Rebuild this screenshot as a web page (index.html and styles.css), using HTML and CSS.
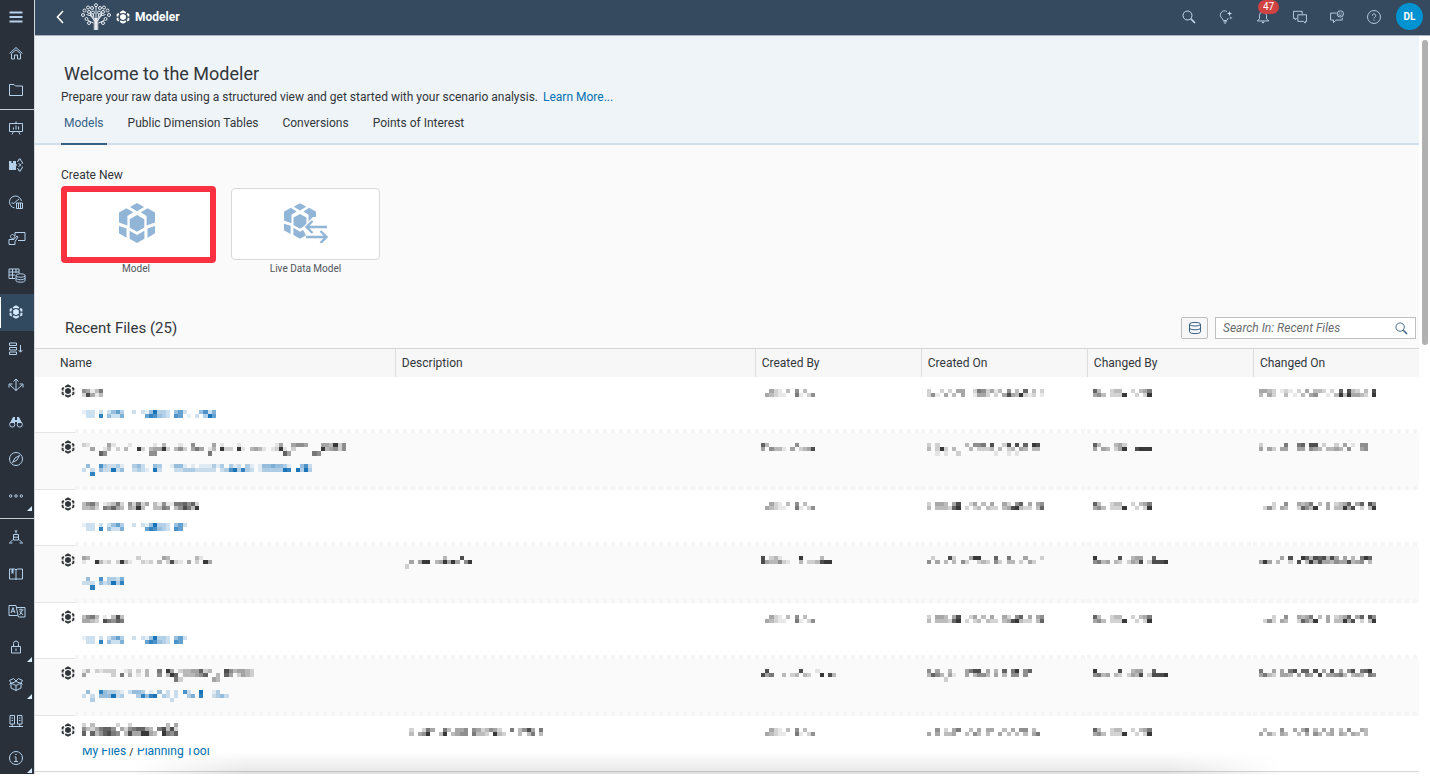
FILE: index.html
```html
<!DOCTYPE html>
<html lang="en">
<head>
    <meta charset="UTF-8">
    <meta name="viewport" content="width=device-width, initial-scale=1.0">
    <title>Modeler</title>
    <link rel="stylesheet" href="styles.css">
</head>
<body>

    <!-- Shared icons -->
    <svg class="symbols" aria-hidden="true">
        <symbol id="cube" viewBox="0 0 36 40">
            <path d="M18 0l7 4-7 4.200-7-4.200zM18 12l7.300 4.200v8.300L18 28.700l-7.300-4.200v-8.300zM0 9.500L7.500 5.200l6.700 4L8.400 13v9.500L0 19.500zM36 9.500l-7.500-4.300-6.700 4 5.800 3.800v9.500l8.400-3zM0 23l7.500 2.400v9.300L0 30.300zM36 23l-7.500 2.400v9.300l7.500-4.400zM10.600 27.700L18 32l7.400-4.300v8L18 40l-7.400-4.300z"/>
        </symbol>
        <symbol id="model" viewBox="0 0 14 14">
            <path d="M4.200 3L7 1.400 9.800 3M11 3.700l1.400.8v2M12.400 7.800v2L11 10.600M9.800 11.200L7 12.700l-2.800-1.500M3 10.600L1.600 9.800v-2M1.600 6.500v-2L3 3.700" fill="none" stroke="currentColor" stroke-width="1.900"/>
            <path d="M7 3.800l2.900 1.600v3.200L7 10.200 4.100 8.600V5.400z"/>
        </symbol>
        <symbol id="search" viewBox="0 0 14 14">
            <circle cx="5.500" cy="5.500" r="4.500" fill="none" stroke="currentColor"/>
            <path d="M8.900 8.900L13 13" stroke="currentColor" stroke-width="1.600"/>
        </symbol>
    </svg>

    <div class="app">
        <!-- Side Navigation -->
        <nav class="sidebar">
            <button class="nav-item menu" aria-label="Menu"><svg viewBox="0 0 16 16"><path d="M1.500 3.500h13M1.500 8h13M1.500 12.500h13" stroke-width="1.800"/></svg></button>
            <div class="nav-group">
                <button class="nav-item" aria-label="Home"><svg viewBox="0 0 16 16"><path d="M1.500 8.500L8 2.500l6.500 6M3.500 8.500v5.500h3v-4h3v4h3V8.500L8 4.800z"/></svg></button>
                <button class="nav-item" aria-label="Files"><svg viewBox="0 0 16 16"><path d="M1.500 13.500v-11h4.500l1.500 1.500h7v9.500z"/></svg></button>
            </div>
            <div class="nav-group">
                <button class="nav-item" aria-label="Stories"><svg viewBox="0 0 16 16"><path d="M1.500 3.500h13v8h-13zM8 1.500v2M5.500 11.500L4 14.500M10.500 11.500l1.500 3M5.500 9.500v-2M8 9.500v-4M10.500 9.500v-3"/></svg></button>
                <button class="nav-item" aria-label="Analytic Applications"><svg viewBox="0 0 16 16"><path class="solid" d="M1 4h2.500v2H5V4h3v3l1.500 1L8 9v4H1z"/><path d="M9 4.500l1.500-.5.5-2h1.500l.5 2 1.500 1-.5 2M14 9.500l.5 1.500-1.500 1-.5 2H11l-.5-2-1.500-.5M10.500 6.500l2.500 1.500-2.500 1.500"/></svg></button>
                <button class="nav-item" aria-label="Digital Boardroom"><svg viewBox="0 0 16 16"><path d="M6.500 13.900A6 6 0 1 1 13.400 7M5 10l6-5M3.500 9h1.500M8.500 9h6v5.500h-6zM10.500 9v5.500M12.500 9v5.500"/></svg></button>
                <button class="nav-item" aria-label="Presentations"><svg class="wide" viewBox="0 0 18 16"><path d="M7 6V2.500h10v8h-7M4.500 4.500a2 2 0 1 0 .1 0M1 14.500V9.500h5l3-3.500 1 1-3 4.500v3z"/></svg></button>
                <button class="nav-item" aria-label="Datasets"><svg class="wide" viewBox="0 0 18 16"><path d="M7 11.500H1V2h10v4M1 5h10M1 8h6M4.500 2v9.500M8 2v4"/><path d="M8 8.500c0-2.300 9-2.300 9 0s-9 2.300-9 0v5c0 2.300 9 2.300 9 0v-5M8 11c0 2.300 9 2.300 9 0"/></svg></button>
                <button class="nav-item selected" aria-label="Modeler"><svg viewBox="0 0 14 14"><use href="#model"/></svg></button>
                <button class="nav-item" aria-label="Data Actions"><svg viewBox="0 0 16 16"><path d="M1.500 2h7v2.500h-7zM1.500 6.500h7V9h-7zM1.500 11h7v2.500h-7zM12.500 4v7M10.500 9l2 2.200 2-2.200"/></svg></button>
                <button class="nav-item" aria-label="Allocations"><svg viewBox="0 0 16 16"><path d="M8 2v12M5.500 4.500L8 2l2.500 2.500M8 13.500L2 8M8 13.500L14 8M1 10.500V7h3.500M15 10.500V7h-3.500"/></svg></button>
                <button class="nav-item" aria-label="Data Analyzer"><svg viewBox="0 0 16 16"><path class="solid" d="M5 3h2v3h2V3h2l3 6H9V8H7v1H2z"/><circle cx="4.200" cy="10.500" r="2.600"/><circle cx="11.800" cy="10.500" r="2.600"/></svg></button>
                <button class="nav-item" aria-label="Explorer"><svg viewBox="0 0 16 16"><circle cx="8" cy="8" r="6.500"/><path d="M11.500 4.500L9 9l-4.500 2.500L7 7z"/></svg></button>
                <button class="nav-item more" aria-label="More"><svg viewBox="0 0 16 16"><circle cx="2.700" cy="8" r="1.200"/><circle cx="8" cy="8" r="1.200"/><circle cx="13.300" cy="8" r="1.200"/></svg></button>
            </div>
            <div class="nav-group">
                <button class="nav-item" aria-label="Connections"><svg viewBox="0 0 16 16"><path d="M8 1.500v3M5.500 5.500h5v5.500h-5zM5.500 8.200h5M5 10.500l-3 3M11 10.500l3 3M1 14h3.500M11.500 14H15M6.800 2h2.400"/></svg></button>
                <button class="nav-item" aria-label="Catalog"><svg viewBox="0 0 16 16"><path d="M8 3.500v10.500M1.500 3h5.500l1 1 1-1h5.500v10H1.500z"/><path class="solid" d="M3.500 3h2v5l-1-1-1 1z"/></svg></button>
                <button class="nav-item" aria-label="Translation"><svg class="wide" viewBox="0 0 18 16"><path d="M9 12.500H1v-10h7l2 10M8.500 4.500H17v9.500h-6.500l-1-2M3 10l2-5.500L7 10M4 8.200h2M11 6.800h4.500M13 5.500v1.300M11.500 12l3-5M11.500 8l3.500 4"/></svg></button>
                <button class="nav-item more" aria-label="Security"><svg viewBox="0 0 16 16"><path d="M3.500 7.500h9V14h-9zM5.500 7.500V4.500a2.500 2.500 0 0 1 5 0v3M8 9.500v2.500"/></svg></button>
                <button class="nav-item more" aria-label="Deployment"><svg viewBox="0 0 16 16"><path d="M8 5.500L3 7.500V12l5 2.500 5-2.500V7.500zM1.500 8.500L3 7l5 2.500L13 7l1.500 1.500M8 9.500v5M3 7L1.500 4.500 5.500 2.500 8 5l2.500-2.500 4 2L13 7"/></svg></button>
                <button class="nav-item" aria-label="System"><svg viewBox="0 0 16 16"><path d="M2 2.500h4.500V11H2zM9.500 2.500H14V11H9.500zM4.200 11v2.500M11.700 11v2.500M1 13.500h14M3.500 5h1.500M11 5h1.500M3.500 7.500h1.500M11 7.500h1.500"/></svg></button>
                <button class="nav-item more" aria-label="About"><svg viewBox="0 0 16 16"><circle cx="8" cy="8" r="6.500"/><path d="M6.500 7H8v4.500M6 11.500h4M7.300 4.500h1.400"/></svg></button>
            </div>
        </nav>

        <div class="main">
            <!-- Shell Bar -->
            <header class="shellbar">
                <button class="back" aria-label="Back"><svg viewBox="0 0 8 14"><path d="M7 1L1.500 7 7 13" fill="none" stroke="currentColor" stroke-width="1.600"/></svg></button>
                <svg class="logo" viewBox="0 0 30 28">
                    <defs>
                        <linearGradient id="trunk"><stop offset="0" stop-color="#8f9aa5"/><stop offset=".5" stop-color="#fff"/><stop offset="1" stop-color="#8f9aa5"/></linearGradient>
                    </defs>
                    <path d="M12.500 27V15h5v12z" fill="url(#trunk)"/>
                    <path d="M15 17V3M13.500 18L10 13l-4.500-1.500M10 13L8 7M12 15L9.500 10M12.500 20L7 17.500M13 16l-1-7M16.500 18l3.500-5 4.500-1.500M20 13l2-6M18 15l2.500-5M17.500 20l5.500-2.500M17 16l1-7" fill="none" stroke="#e8eef4"/>
                    <g fill="#354a5f" stroke="#e8eef4">
                        <circle cx="15" cy="2.200" r="1.500"/><circle cx="11" cy="5" r="1.500"/><circle cx="19" cy="5" r="1.500"/>
                        <circle cx="7" cy="4.500" r="1.500"/><circle cx="23" cy="4.500" r="1.500"/><circle cx="3.500" cy="7.500" r="1.500"/><circle cx="26.500" cy="7.500" r="1.500"/>
                        <circle cx="2" cy="12" r="1.500"/><circle cx="28" cy="12" r="1.500"/><circle cx="8" cy="9" r="1.500"/><circle cx="22" cy="9" r="1.500"/>
                        <circle cx="12" cy="9.500" r="1.500"/><circle cx="18" cy="9.500" r="1.500"/><circle cx="5.500" cy="16" r="1.500"/><circle cx="24.500" cy="16" r="1.500"/>
                        <circle cx="8" cy="20" r="1.500"/><circle cx="22" cy="20" r="1.500"/>
                    </g>
                </svg>
                <svg class="app-icon" viewBox="0 0 14 14"><use href="#model"/></svg>
                <span class="app-name">Modeler</span>
                <div class="shell-actions">
                    <button aria-label="Search"><svg viewBox="0 0 14 14"><use href="#search"/></svg></button>
                    <button aria-label="Insights"><svg viewBox="0 0 16 16"><path d="M9 1.800a4.700 4.700 0 0 0-5.500 7.700L5 12h4l1.500-2.800M5 13.500h4M6 15h2"/><path class="solid" d="M12 1l.8 2.200 2.200.8-2.200.8-.8 2.200-.8-2.200L9 4l2.200-.8zM13.500 7l.5 1.500 1.500.5-1.500.5-.5 1.500-.5-1.500-1.500-.5 1.500-.5z"/></svg></button>
                    <button aria-label="Notifications"><svg viewBox="0 0 16 16"><path d="M1.500 12.500L4 10V6a4 4 0 0 1 8 0v4l2.500 2.500z"/><path class="solid" d="M6 13.500h4l-2 2z"/></svg><span class="badge">47</span></button>
                    <button aria-label="Comments"><svg viewBox="0 0 16 16"><path d="M4.500 9.500L2.500 11V9.500h-2v-8h10V5M5.500 5.500h10v7.500h-1.500v2l-2-2H5.500z"/></svg></button>
                    <button aria-label="Feedback"><svg viewBox="0 0 16 16"><path d="M7.500 3.500H.7v8H4v3l3-3h7V9"/><circle cx="11.800" cy="4.500" r="3.600"/><path d="M9.800 5c1 1.700 3 1.700 4 0M10.300 3.500h1M12.300 3.500h1"/></svg></button>
                    <button aria-label="Help"><svg viewBox="0 0 16 16"><circle cx="8" cy="8" r="7.400"/><path d="M6 6.500c0-3 4-2.500 4 0C10 8 8 8 8 9.800M8 11v1.300"/></svg></button>
                    <button class="avatar">DL</button>
                </div>
            </header>

            <div class="content-wrap">
                <main class="content">
                    <section class="page-header">
                        <h1>Welcome to the Modeler</h1>
                        <p>Prepare your raw data using a structured view and get started with your scenario analysis. <a href="#">Learn More...</a></p>
                        <div class="tabs" role="tablist">
                            <button class="tab active" role="tab" aria-selected="true">Models</button>
                            <button class="tab" role="tab">Public Dimension Tables</button>
                            <button class="tab" role="tab">Conversions</button>
                            <button class="tab" role="tab">Points of Interest</button>
                        </div>
                    </section>

                    <!-- Create New -->
                    <section class="create">
                        <h2>Create New</h2>
                        <div class="tiles">
                            <div class="tile highlighted">
                                <button aria-labelledby="tileModel"><svg class="cube" viewBox="0 0 36 40"><use href="#cube"/></svg></button>
                                <span id="tileModel">Model</span>
                            </div>
                            <div class="tile">
                                <button aria-labelledby="tileLive">
                                    <svg class="live-cube" viewBox="0 0 44 40">
                                        <use href="#cube" width="32" height="36"/>
                                        <path d="M29 14L18 25l8 15h18V21L34 14z" fill="#fff"/>
                                        <path d="M43 24H23M28.500 18L22.500 24l6 6M22 34h20M36.500 28l6 6-6 6" fill="none" stroke="currentColor" stroke-width="2.400"/>
                                    </svg>
                                </button>
                                <span id="tileLive">Live Data Model</span>
                            </div>
                        </div>
                    </section>

                    <!-- Recent Files -->
                    <section class="recent">
                        <div class="toolbar">
                            <h2>Recent Files (25)</h2>
                            <button class="db-button" aria-label="Data sources"><svg viewBox="0 0 14 14"><path d="M1.500 3.200c0-2.400 11-2.400 11 0s-11 2.400-11 0v7.600c0 2.400 11 2.400 11 0V3.200M1.500 7c0 2.400 11 2.400 11 0" fill="none" stroke="currentColor"/></svg></button>
                            <div class="search-box">
                                <input type="text" aria-label="Search files" placeholder="Search In: Recent Files">
                                <svg viewBox="0 0 14 14"><use href="#search"/></svg>
                            </div>
                        </div>

                        <table class="files">
                            <colgroup>
                                <col class="col-icon"><col><col class="col-desc"><col class="col-meta"><col class="col-meta"><col class="col-meta"><col class="col-meta">
                            </colgroup>
                            <thead>
                                <tr>
                                    <th colspan="2">Name</th>
                                    <th>Description</th>
                                    <th>Created By</th>
                                    <th>Created On</th>
                                    <th>Changed By</th>
                                    <th>Changed On</th>
                                </tr>
                            </thead>
                            <tbody id="fileRows"></tbody>
                        </table>
                    </section>
                    <div class="bottom-shade"></div>
                </main>
                <div class="scrollbar"><div class="thumb"></div></div>
            </div>
        </div>
    </div>

    <script src="files.js"></script>
</body>
</html>
```
FILE: styles.css
```css
/* General Reset */
* {
    margin: 0;
    padding: 0;
    box-sizing: border-box;
    font-family: Roboto, "Liberation Sans", sans-serif;
}

body {
    background-color: #fff;
    color: #32363a;
    font-size: 12px;
    line-height: 16px;
}

button {
    border: none;
    background: none;
    color: inherit;
    font-size: 12px;
    cursor: pointer;
}

a {
    color: #0070b1;
    text-decoration: none;
}

h1, h2 {
    font-weight: normal;
}

.symbols {
    display: none;
}

svg {
    display: block;
    fill: currentColor;
}

.app {
    display: flex;
    height: 100vh;
    padding-bottom: 5px;
    overflow: hidden;
}

/* Side Navigation */
.sidebar {
    flex: none;
    width: 34px;
    background-color: #29303a;
    color: #b4d0ea;
    overflow: hidden;
}

.nav-item {
    position: relative;
    display: flex;
    align-items: center;
    width: 34px;
    height: 37px;
    padding: 0 0 2px 8px;
}

.nav-item.menu {
    height: 35px;
    padding-bottom: 1px;
}

.nav-item svg {
    width: 16px;
    height: 16px;
    fill: none;
    stroke: currentColor;
}

.nav-item svg.wide {
    width: 18px;
}

.nav-item svg .solid,
.shell-actions svg .solid {
    fill: currentColor;
    stroke: none;
}

.nav-group + .nav-group {
    border-top: 1px solid #c9ccd0;
}

.nav-group .nav-item:nth-child(4n) {
    height: 36px;
}

.nav-group:last-child {
    margin-top: 3px;
}

.nav-item.selected {
    background-color: #324a60;
    color: #d6ebff;
}

.nav-item.selected svg {
    fill: currentColor;
    stroke: none;
    width: 14px;
    height: 14px;
    margin-left: 1px;
}

.nav-item.selected::before {
    content: "";
    position: absolute;
    left: 0;
    top: 3px;
    bottom: 3px;
    width: 1px;
    background-color: #fff;
}

.nav-item.more::after {
    content: "";
    position: absolute;
    right: 2px;
    bottom: 4px;
    border-left: 5px solid transparent;
    border-bottom: 5px solid #d6ebff;
}

/* Shell Bar */
.main {
    flex: 1;
    min-width: 0;
    display: flex;
    flex-direction: column;
    border-left: 1px solid #d5dade;
}

.shellbar {
    flex: none;
    display: flex;
    align-items: center;
    height: 36px;
    padding: 0 7px 2px 21px;
    background-color: #354a5f;
    border-bottom: 1px solid #a9b4be;
    color: #fff;
}

.back svg {
    width: 8px;
    height: 14px;
}

.back {
    width: 25px;
}

.logo {
    width: 30px;
    height: 28px;
}

.app-icon {
    width: 14px;
    height: 14px;
    margin: 0 5px 0 5px;
}

.app-name {
    font-weight: bold;
}

.shell-actions {
    display: flex;
    align-items: center;
    margin-left: auto;
}

.shell-actions button {
    position: relative;
    display: flex;
    justify-content: center;
    width: 37px;
    color: #c3dcf3;
}

.shell-actions svg {
    width: 14px;
    height: 14px;
    fill: none;
    stroke: currentColor;
}

.badge {
    position: absolute;
    top: -10px;
    left: 14px;
    width: 21px;
    height: 14px;
    border-radius: 7px;
    background-color: #d14343;
    color: #fff;
    font-size: 10px;
    line-height: 14px;
}

.shell-actions .avatar {
    width: 27px;
    height: 27px;
    margin-left: 4px;
    border-radius: 50%;
    background-color: #0092d1;
    color: #fff;
    font-size: 10px;
    line-height: 27px;
    font-weight: bold;
}

/* Page */
.content-wrap {
    flex: 1;
    min-height: 0;
    display: flex;
}

.content {
    position: relative;
    flex: 1;
    min-width: 0;
    background-color: #fafafa;
    overflow: hidden;
}

.scrollbar {
    flex: none;
    width: 11px;
    padding: 4px 2px 0 3px;
    background-color: #fff;
}

.thumb {
    width: 6px;
    height: 305px;
    border-radius: 3px;
    background-color: #b1b1b1;
}

.page-header {
    padding: 26px 26px 0;
    background-color: #eff4f8;
    border-bottom: 2px solid #d1deec;
}

.page-header h1 {
    padding-left: 3px;
    font-size: 18px;
    line-height: 24px;
}

.page-header p {
    margin-top: 3px;
}

.page-header p a {
    margin-left: 2px;
}

.tabs {
    display: flex;
    gap: 18px;
    margin-top: 10px;
    margin-bottom: -2px;
}

.tab {
    height: 30px;
    padding: 0 3px 12px;
    border-bottom: 2px solid transparent;
    line-height: 16px;
}

.tab.active {
    color: #346187;
    border-bottom-color: #346187;
}

/* Create New */
.create {
    padding: 22px 26px 0;
}

.create h2 {
    font-size: 12px;
    line-height: 16px;
}

.tiles {
    display: flex;
    gap: 15px;
    margin-top: 3px;
}

.tile {
    width: 149px;
    padding-top: 2px;
    text-align: center;
    font-size: 10px;
    line-height: 12px;
    color: #51555a;
}

.tile button {
    display: flex;
    align-items: center;
    justify-content: center;
    width: 100%;
    height: 72px;
    margin-bottom: 3px;
    padding-bottom: 3px;
    background-color: #fff;
    border: 1px solid #d9d9d9;
    border-radius: 4px;
    color: #91b5d6;
}

.tile.highlighted {
    width: 155px;
    padding-top: 0;
}

.tile.highlighted button {
    height: 77px;
    margin-bottom: 0;
    padding: 0 4px 4px 0;
    border: 6px solid #fa3140;
}

.tile.highlighted span {
    padding-right: 5px;
}

.cube {
    width: 36px;
    height: 40px;
}

.live-cube {
    width: 44px;
    height: 40px;
}

/* Recent Files */
.toolbar {
    display: flex;
    align-items: center;
    height: 24px;
    margin-top: 41px;
    padding: 0 3px 0 30px;
}

.toolbar h2 {
    margin-right: auto;
    font-size: 15px;
}

.db-button {
    display: flex;
    align-items: center;
    justify-content: center;
    width: 27px;
    height: 22px;
    margin-right: 7px;
    border: 1px solid #bfbfbf;
    border-radius: 2px;
    background-color: #f7f7f7;
    color: #346187;
}

.db-button svg {
    width: 14px;
    height: 14px;
}

.search-box {
    display: flex;
    align-items: center;
    width: 201px;
    height: 22px;
    padding: 0 7px;
    border: 1px solid #bfbfbf;
    background-color: #fff;
    color: #346187;
}

.search-box input {
    flex: 1;
    min-width: 0;
    border: none;
    outline: none;
    font-size: 12px;
}

.search-box input::placeholder {
    color: #6a6d70;
    font-style: italic;
}

.search-box svg {
    width: 13px;
    height: 13px;
}

/* Files Table */
.files {
    width: 100%;
    margin-top: 8px;
    table-layout: fixed;
    border-collapse: separate;
    border-spacing: 0;
    border-top: 1px solid #d6d6d6;
}

.col-icon {
    width: 40px;
}

.col-desc {
    width: 26%;
}

.col-meta {
    width: 12%;
}

.files th {
    height: 28px;
    padding-left: 6px;
    background-color: #f7f7f7;
    border-left: 1px solid #dcdcdc;
    font-weight: normal;
    text-align: left;
}

.files th:first-child {
    padding-left: 25px;
    border-left: none;
}

.files td {
    height: 56px;
    padding: 12px 0 0 6px;
    vertical-align: top;
    background: #fff repeating-linear-gradient(to right, #f5f5f5 0 4px, transparent 4px 8px) bottom / 100% 4px no-repeat;
}

.files tr:nth-child(even) td {
    height: 57px;
    padding-top: 10px;
    background-color: #fafafa;
}

.files td.icon,
.files tr:nth-child(even) td.icon {
    padding: 7px 0 0 26px;
    background-image: none;
    border-bottom: 1px solid #e5e5e5;
}

.files td.icon svg {
    width: 14px;
    height: 14px;
}

.files td.name {
    padding-left: 7px;
}

.files tr:last-child td {
    background-image: none;
    border-bottom: 1px solid #d6d6d6;
}

.path {
    display: block;
    height: 16px;
}

.files .text-path td.name {
    padding-top: 7px;
}

/* Scrolled-under line: a strip hides the tops of its letters */
.path.text {
    position: relative;
    margin-top: 7px;
}

.path.text::before {
    content: "";
    position: absolute;
    top: 0;
    left: 0;
    width: 100%;
    height: 5px;
    background-color: #fff;
}

.mosaic {
    color: #222;
}

.mosaic.link {
    color: #0064b0;
}

.bottom-shade {
    position: absolute;
    left: 7%;
    right: 10%;
    bottom: 0;
    height: 22px;
    background: linear-gradient(to bottom, transparent, rgba(0, 0, 0, 0.1));
    -webkit-mask-image: linear-gradient(to right, transparent, #000 10%, #000 90%, transparent);
    mask-image: linear-gradient(to right, transparent, #000 10%, #000 90%, transparent);
    pointer-events: none;
}
```
FILE: files.js
```js
// Masked values: one digit per block, 1 = faint, 9 = solid, rows split by "|"
const FOLDER_LONG = "122.2.2463..2.2149332.462...4725|.22.8.4225.....687432.76.1.2.396";
const FOLDER = "122.2.2463..2.2149332.462|.22.8.4225.....687432.76.";
const AUTHOR = ".421.3.5.3..|43211..61.25";
const EDITOR = "73..233..2.346|453.2229..2.29";
const EDITOR_B = "9.....8..344..7...|5634.32.2438.28889";

const files = [
    {
        name: "54136|28413", path: FOLDER_LONG, desc: "", createdBy: "." + AUTHOR.replace("|", "|."),
        createdOn: "2..2.2.44..2652413.5.3.7.3.2|251.4.3.4..1442.2.48439212.1",
        changedBy: EDITOR, changedOn: "4432.121.2.4.332.2.7.832.3.8|3.42..3.1.3.45..1.39394432.9"
    },
    {
        name: "21....41...1.....1.3...1..5....4.1...1........14..4554...443925|..4..13.2.3..92.34492.352.464.13.922.91.3431.1291.2......934525|....75..........55............6.................74.....65......",
        path: ".4..732231..342..43..1441.1.111313.312.31.14454431..472|2.2.422924..2321.92...2233322222.23793832.13333398.9393|..8", desc: "",
        createdBy: "73......5....|4.5331.4.2348",
        createdOn: "2.2......3.556.8..28.8.7.98|3.292.3...3.2223.3.23.43.33|..1.1..2........1..1.1"
        , changedBy: "73...342......|4.43.249..8999", changedOn: "2.....6..67.88.2..2.4.1.55|4.42.44..44.543.3343.5..45|..........................."
    },
    {
        name: "3563.12362.52624.31511667572|3342.65743.4393..3365.358639", path: FOLDER, desc: "",
        createdBy: "." + AUTHOR.replace("|", "|."), createdOn: "2.443.48..24.3.4..42.57.4.45|3.333279.2.23.322.3489322.37",
        changedBy: EDITOR, changedOn: "...2..5..4346.3.4.2347.47.85|.252.43..27539..4.33948.2.39"
    },
    {
        name: "43...........2.....43......31..|1..9312.2931..212.3.2821.4.2.94", path: ".4..7.3325|222.423938|..8",
        desc: "..........3...8..|..4.499.349494.59|.2", createdBy: "8.231....9....3..|8433521..3.223899",
        createdOn: ".2...82...499...7..6...4...2|5.4.3.3.52..232.52.33.2.42..",
        changedBy: EDITOR_B, changedOn: ".....4.8..973878384.4.3.697.|494.3..2.8.39484435448345.3."
    },
    {
        name: "3563.1.383|4432.86576", path: FOLDER, desc: "", createdBy: "." + AUTHOR.replace("|", "|."),
        createdOn: "2.443.48..24.3.4..42.57.4.45|3.333279.2.23.322.3489322.37",
        changedBy: EDITOR, changedOn: "...2..5..4346.3.4.2347.47.85|.252.43..27539..4.33948.2.39"
    },
    {
        name: "13.21222..12.2.3..6.94.23344723...8534432|4......2.6.3.1.3..5.397.333457..3.74.2432|......................62.......43",
        path: ".4..843321.2443.1.4.2.2.72..9..13..|2.2.444923...38489.32.2..35.8..2342|..3..................2", desc: "",
        createdBy: ".8.......8...1....|846..3.23.32..9.83",
        createdOn: "5.4..3...4688.4.3.7.69.57|3753.41..4.3553.4.3.55.5.|....2",
        changedBy: EDITOR_B, changedOn: "6..4.4.68.77.8.4.8.4.58.679|4632.443.4.54.8.44563.343.65"
    },
    {
        name: "2.3.....2..2........3.4|53246775.42567743.68382|7.7357865.38449943.9657", path: null,
        desc: "..2..264..63.445.5423542..6.3584.6|..3.459..39.3455.6332.932...3.36.3",
        createdBy: "." + AUTHOR.replace("|", "|."), createdOn: "..5.2.46..3.4.44..3.4.55.3.|4.4.334..3.53.3..4.3.3.3.46",
        changedBy: EDITOR, changedOn: ".3...5..4.46.3.4.4.3.5..43|4.42.43..3.4.53.34.43.43.3."
    }
];

const BLOCK = 4.19;

function mosaic(cells, extraClass) {
    if (!cells) {
        return "";
    }
    const rows = cells.split("|");
    const cols = Math.max(...rows.map(row => row.length));
    let rects = "";
    rows.forEach((row, y) => {
        [...row].forEach((level, x) => {
            if (level !== ".") {
                rects += `<rect x="${x}" y="${y}" width="1" height="1" opacity="${level / 10}"/>`;
            }
        });
    });
    return `<svg class="mosaic ${extraClass || ""}" viewBox="0 0 ${cols} ${rows.length}" width="${cols * BLOCK}" height="${rows.length * BLOCK}" shape-rendering="crispEdges">${rects}</svg>`;
}

document.getElementById("fileRows").innerHTML = files.map(file => {
    const rowCount = file.name.split("|").length;
    const path = file.path
        ? `<a class="path" href="#" style="margin-top:${21 - Math.round(rowCount * BLOCK)}px">${mosaic(file.path, "link")}</a>`
        : `<span class="path text"><a href="#">My Files</a> / <a href="#">Planning Tool</a></span>`;
    return `
        <tr class="${file.path ? "" : "text-path"}">
            <td class="icon"><svg viewBox="0 0 14 14"><use href="#model"/></svg></td>
            <td class="name">${mosaic(file.name)}${path}</td>
            <td>${mosaic(file.desc)}</td>
            <td>${mosaic(file.createdBy)}</td>
            <td>${mosaic(file.createdOn)}</td>
            <td>${mosaic(file.changedBy)}</td>
            <td>${mosaic(file.changedOn)}</td>
        </tr>`;
}).join("");
```
